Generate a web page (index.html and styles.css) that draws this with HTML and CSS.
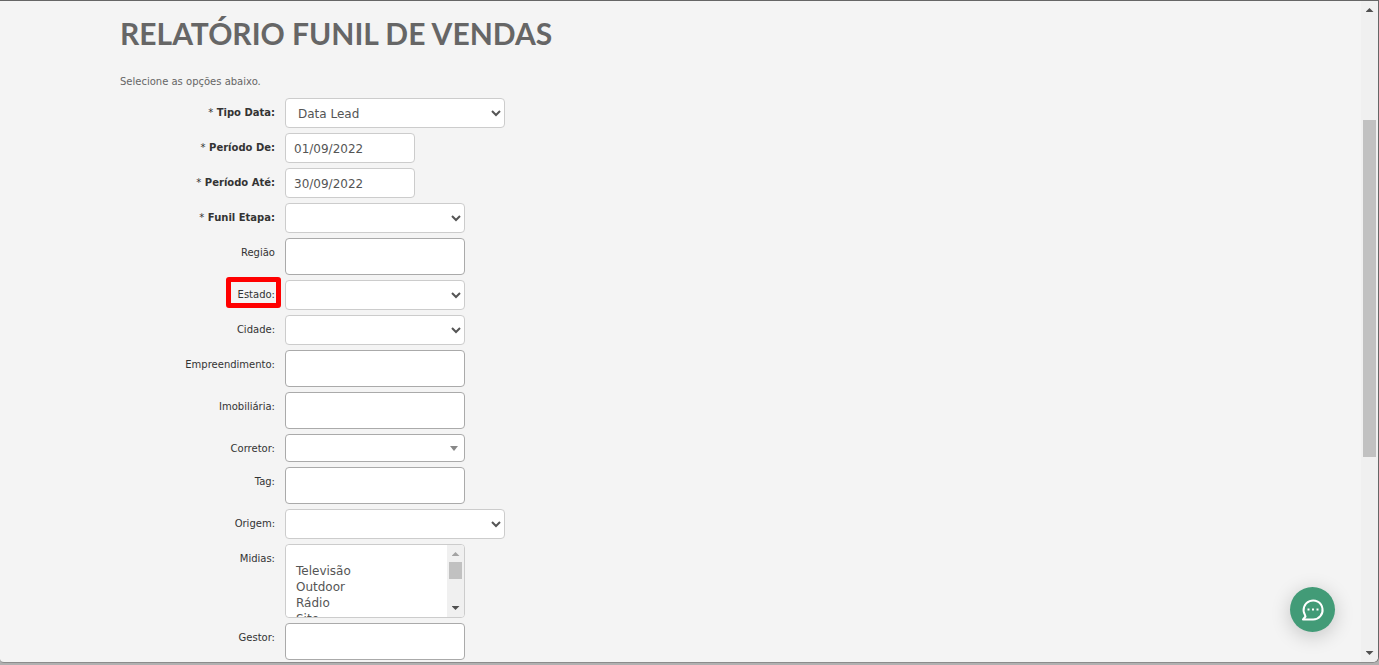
FILE: index.html
```html
<!DOCTYPE html>
<html lang="pt-BR">
<head>
    <meta charset="UTF-8">
    <meta name="viewport" content="width=device-width, initial-scale=1.0">
    <title>Relatório Funil de Vendas</title>
    <link rel="stylesheet" href="styles.css">
</head>

<body>
  <div class="window">
    <main class="page">
      <div class="container">
        <h1>RELATÓRIO FUNIL DE VENDAS</h1>
        <p>Selecione as opções abaixo.</p>

        <form>
          <div class="row required">
            <label for="tipo-data"><span>*</span> Tipo Data:</label>
            <select id="tipo-data" class="wide">
              <option>Data Lead</option>
            </select>
          </div>
          <div class="row required">
            <label for="periodo-de"><span>*</span> Período De:</label>
            <input type="text" id="periodo-de" class="date" value="01/09/2022">
          </div>
          <div class="row required">
            <label for="periodo-ate"><span>*</span> Período Até:</label>
            <input type="text" id="periodo-ate" class="date" value="30/09/2022">
          </div>
          <div class="row required">
            <label for="funil-etapa"><span>*</span> Funil Etapa:</label>
            <select id="funil-etapa"><option></option></select>
          </div>
          <div class="row">
            <label for="regiao">Região</label>
            <input type="text" id="regiao" class="tags">
          </div>
          <div class="row">
            <label for="estado" class="marked">Estado:</label>
            <select id="estado"><option></option></select>
          </div>
          <div class="row">
            <label for="cidade">Cidade:</label>
            <select id="cidade"><option></option></select>
          </div>
          <div class="row">
            <label for="empreendimento">Empreendimento:</label>
            <input type="text" id="empreendimento" class="tags">
          </div>
          <div class="row">
            <label for="imobiliaria">Imobiliária:</label>
            <input type="text" id="imobiliaria" class="tags">
          </div>
          <div class="row">
            <label for="corretor">Corretor:</label>
            <div class="combo">
              <select id="corretor"><option></option></select>
            </div>
          </div>
          <div class="row">
            <label for="tag">Tag:</label>
            <input type="text" id="tag" class="tags">
          </div>
          <div class="row">
            <label for="origem">Origem:</label>
            <select id="origem" class="wide"><option></option></select>
          </div>
          <div class="row">
            <label for="midias">Midias:</label>
            <div class="listbox">
              <select id="midias" multiple>
                <option></option>
                <option>Televisão</option>
                <option>Outdoor</option>
                <option>Rádio</option>
                <option>Site</option>
              </select>
              <div class="scrollbar">
                <i class="up disabled"></i>
                <i class="thumb"></i>
                <i class="down"></i>
              </div>
            </div>
          </div>
          <div class="row">
            <label for="gestor">Gestor:</label>
            <input type="text" id="gestor" class="tags">
          </div>
        </form>
      </div>
    </main>

    <div class="scrollbar page-scroll">
      <i class="up"></i>
      <i class="thumb"></i>
      <i class="down"></i>
    </div>

    <button type="button" class="chat" aria-label="Chat">
      <svg width="24" height="24" viewBox="0 0 24 24" fill="none" stroke="#fff" stroke-width="2" stroke-linejoin="round">
        <path d="M2 21.500 H12 A9.500 9.500 0 1 0 4 17 L4.500 18.500 Z"/>
        <path d="M6.500 11.500h2M11 11.500h2M15.500 11.500h2"/>
      </svg>
    </button>
  </div>
</body>
</html>
```
FILE: styles.css
```css
* {
  box-sizing: border-box;
}
body {
  margin: 0;
  background: #b0b0b0;
  color: #666;
  font-family: Verdana, "DejaVu Sans", sans-serif;
  font-size: 10px;
}
.window {
  position: relative;
  display: flex;
  height: calc(100vh - 2px);
  overflow: hidden;
  background: #f4f4f4;
  border: 1px solid #666;
  border-width: 1px 1px 1px 0;
  border-bottom-color: #8c8c8c;
  border-radius: 0 0 6px 4px;
}
.page {
  flex: 1;
  overflow: hidden;
}
.container {
  max-width: 1121px;
  margin: 0 auto;
}
h1 {
  margin: 12px 0 0;
  font-family: Lato, sans-serif;
  font-size: 30px;
  font-weight: bold;
  line-height: 40px;
}
p {
  margin: 21px 0 9px;
  line-height: 15px;
}

/* form rows */
.row {
  display: grid;
  grid-template-columns: 155px 1fr;
  column-gap: 10px;
  align-items: start;
  justify-items: start;
  margin-bottom: 5px;
}
label {
  position: relative;
  justify-self: end;
  color: #333;
  line-height: 30px;
}
/* keeps the label from making the shorter rows taller */
.row label {
  height: 28px;
}
.required label {
  font-weight: bold;
}
.required span {
  font-weight: normal;
}
.marked::after {
  content: "";
  position: absolute;
  inset: -3px -6px 0 -12px;
  border: 5px solid #f00;
  border-radius: 3px;
}
input, select {
  display: block;
  width: 180px;
  height: 30px;
  margin: 0;
  padding: 5px 8px 4px;
  background-color: #fff;
  border: 1px solid #ccc;
  border-radius: 4px;
  color: #555;
  font-family: Verdana, "DejaVu Sans", sans-serif;
  font-size: 12px;
}
.wide {
  width: 220px;
}
.date {
  width: 130px;
}
.tags {
  height: 37px;
  border-color: #aaa;
}
.combo {
  position: relative;
}
.combo select {
  height: 28px;
  appearance: none;
  border-color: #aaa;
}
.combo::after {
  content: "";
  position: absolute;
  top: 12px;
  right: 7px;
  border: 4px solid transparent;
  border-top: 5px solid #888;
  border-bottom: 0;
}

/* list of midias */
.listbox {
  display: flex;
  width: 180px;
  height: 74px;
  overflow: hidden;
  background: #fff;
  border: 1px solid #ccc;
  border-radius: 4px;
}
.listbox select {
  flex: 1;
  min-width: 0;
  height: 72px;
  padding: 3px 8px 0;
  border: 0;
  overflow: hidden;
}
.listbox option {
  height: 16px;
  min-height: 16px;
  padding: 0 2px;
  line-height: 16px;
}

/* scrollbars */
.scrollbar {
  display: flex;
  flex-direction: column;
  align-items: center;
  width: 17px;
  background: #f0f0f0;
}
.scrollbar .thumb {
  width: 13px;
  height: 17px;
  background: #c1c1c1;
}
.up, .down {
  width: 8px;
  height: 4px;
  margin: 7px 0 6px;
  background: #505050;
}
.up {
  clip-path: polygon(50% 0, 100% 100%, 0 100%);
}
.down {
  margin-top: auto;
  margin-bottom: 7px;
  clip-path: polygon(0 0, 100% 0, 50% 100%);
}
.disabled {
  background: #a3a3a3;
}
.page-scroll .thumb {
  height: 51%;
  margin-top: 102px;
}

.chat {
  position: absolute;
  right: 43px;
  bottom: 30px;
  display: flex;
  align-items: center;
  justify-content: center;
  width: 45px;
  height: 45px;
  padding: 0;
  background: #429b77;
  border: 0;
  border-radius: 50%;
  box-shadow: 0 4px 20px rgba(0, 0, 0, 0.2);
}
```
